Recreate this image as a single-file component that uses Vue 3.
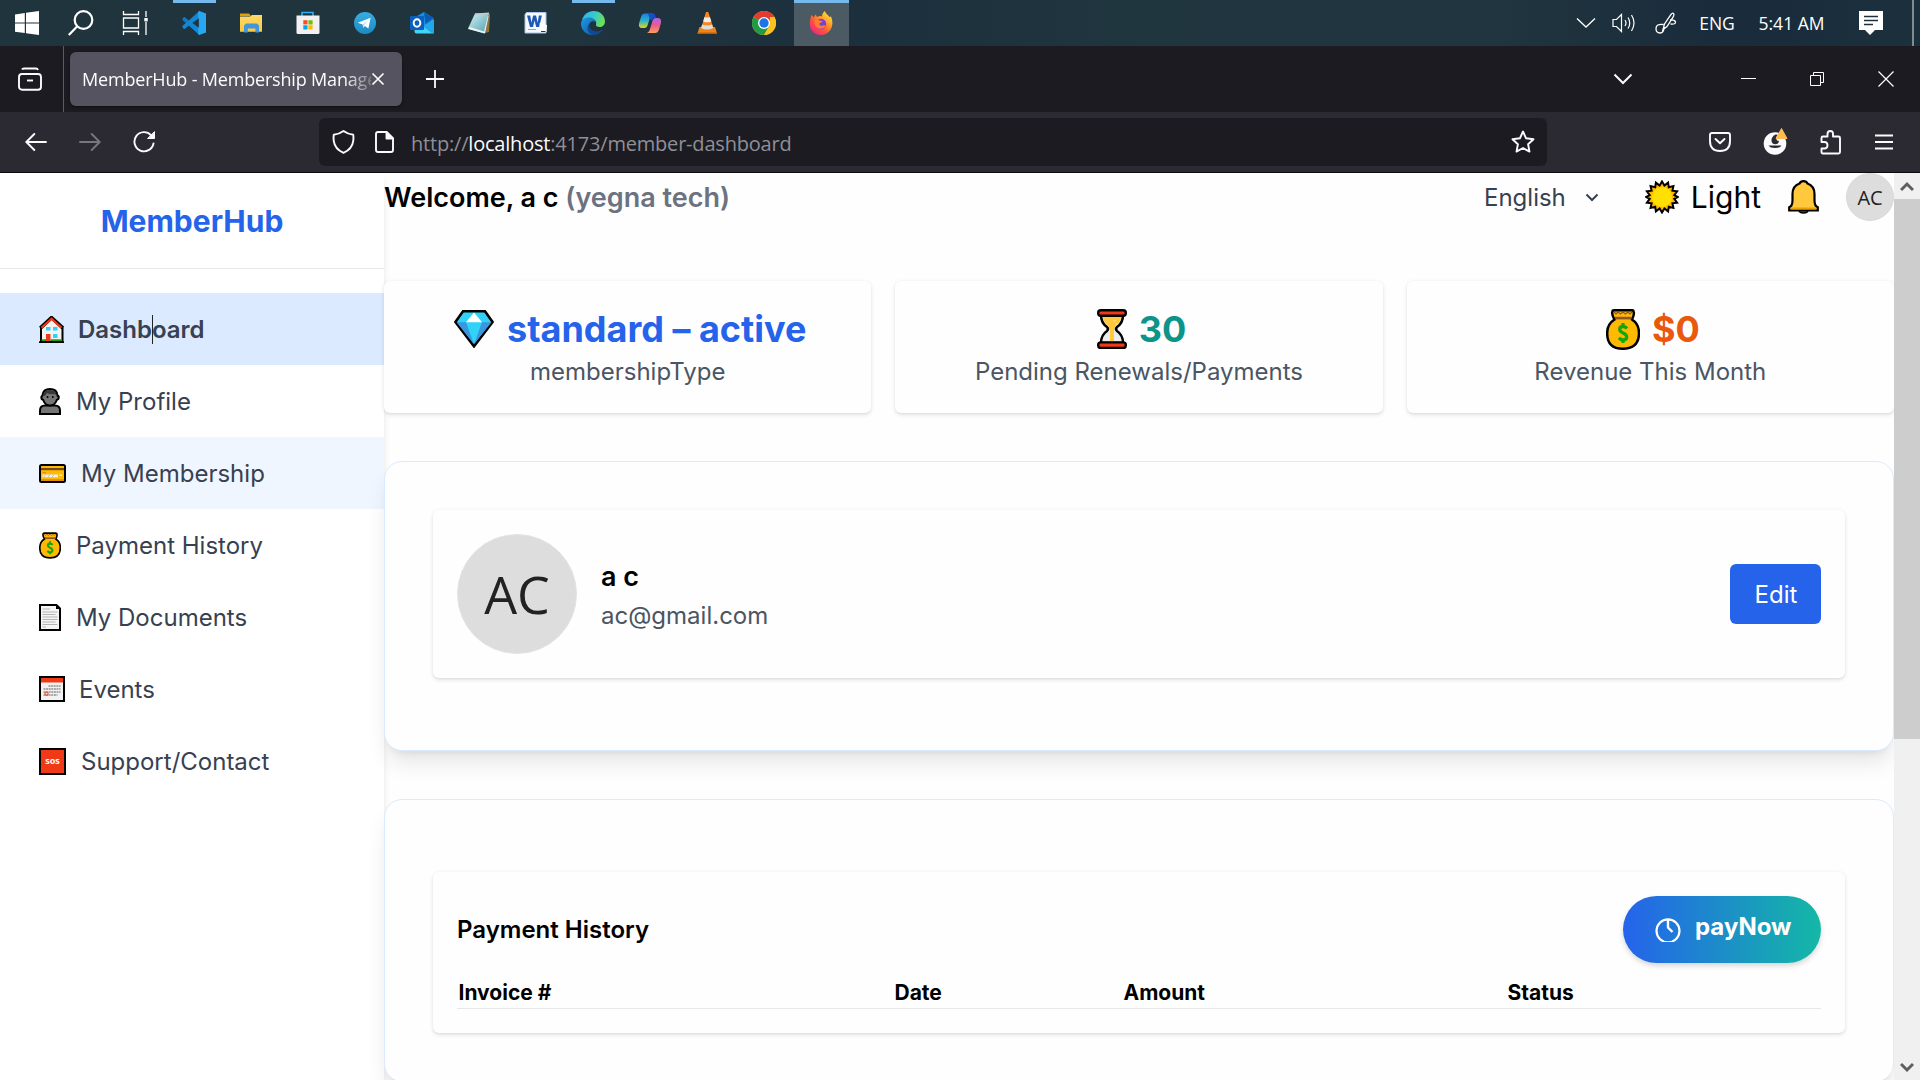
<script setup>
const pinned = [
  { id: 'vscode', open: true },
  { id: 'explorer' },
  { id: 'store' },
  { id: 'telegram' },
  { id: 'outlook' },
  { id: 'notepad' },
  { id: 'word' },
  { id: 'edge', open: true },
  { id: 'copilot' },
  { id: 'vlc' },
  { id: 'chrome' },
  { id: 'firefox', current: true },
]

const nav = [
  { label: 'Dashboard', icon: 'house', w: 25, h: 27, slot: 39, state: 'active' },
  { label: 'My Profile', icon: 'person', w: 22, h: 27, slot: 37 },
  { label: 'My Membership', icon: 'card', w: 27, h: 19, slot: 42, state: 'hover' },
  { label: 'Payment History', icon: 'moneybag', w: 22, h: 27, slot: 37 },
  { label: 'My Documents', icon: 'doc', w: 22, h: 27, slot: 37 },
  { label: 'Events', icon: 'calendar', w: 26, h: 26, slot: 40 },
  { label: 'Support/Contact', icon: 'sos', w: 27, h: 27, slot: 42 },
]

const stats = [
  { value: 'standard – active', label: 'membershipType', icon: 'gem', w: 40, h: 38, tone: 'blue', gap: 13 },
  { value: '30', label: 'Pending Renewals/Payments', icon: 'hourglass', w: 30, h: 40, tone: 'teal', gap: 12 },
  { value: '$0', label: 'Revenue This Month', icon: 'moneybag', w: 34, h: 41, tone: 'orange', gap: 12 },
]

const columns = ['Invoice #', 'Date', 'Amount', 'Status']
</script>

<template>
  <div class="screen">
    <svg class="sprite" aria-hidden="true">
      <defs>
        <linearGradient id="g-edge" x1="0" y1="0" x2="1" y2="0.3"><stop offset="0" stop-color="#2fb4ea" /><stop offset=".55" stop-color="#35c8d0" /><stop offset="1" stop-color="#6be05a" /></linearGradient>
        <linearGradient id="g-edge2" x1="0" y1="0" x2="1" y2="1"><stop offset="0" stop-color="#1f9ae0" /><stop offset="1" stop-color="#0c58b0" /></linearGradient>
        <linearGradient id="g-cop1" x1="0" y1="0" x2="0" y2="1"><stop offset="0" stop-color="#1b7fe6" /><stop offset=".5" stop-color="#2bb3c9" /><stop offset="1" stop-color="#e7d320" /></linearGradient>
        <linearGradient id="g-cop2" x1="0" y1="0" x2="0" y2="1"><stop offset="0" stop-color="#a765ee" /><stop offset=".5" stop-color="#ee5a8c" /><stop offset="1" stop-color="#ffa057" /></linearGradient>
        <linearGradient id="g-fox" x1="1" y1="0" x2="0.2" y2="1"><stop offset="0" stop-color="#fff44f" /><stop offset=".35" stop-color="#ffae2a" /><stop offset=".65" stop-color="#ff5634" /><stop offset="1" stop-color="#f0208c" /></linearGradient>
        <linearGradient id="g-tg" x1="0" y1="0" x2="0" y2="1"><stop offset="0" stop-color="#37aee2" /><stop offset="1" stop-color="#1c8ac4" /></linearGradient>
        <linearGradient id="g-folder" x1="0" y1="0" x2="0" y2="1"><stop offset="0" stop-color="#ffd968" /><stop offset="1" stop-color="#fcc83c" /></linearGradient>
        <linearGradient id="g-note" x1="0" y1="0" x2="1" y2="1"><stop offset="0" stop-color="#d9f2f4" /><stop offset="1" stop-color="#4d9fb0" /></linearGradient>
      </defs>

      <symbol id="vscode" viewBox="0 0 24 24">
        <path d="M17.3 0 7 9.5 2.6 6.1.6 7v2.2l16.7 14.4z" fill="#0f7ac4" />
        <path d="M17.3 24 7 14.5 2.6 17.9.6 17v-2.2L17.3.4z" fill="#1387d6" />
        <path d="M17.3 0 24 2.6v18.8L17.3 24l-1.2-.8V.8z" fill="#29a6f2" />
        <path d="M16.8 7.2v9.6L10.4 12z" fill="#20353f" />
      </symbol>
      <symbol id="explorer" viewBox="0 0 24 24">
        <path d="M1 2.6h9l1.8 2.4H1z" fill="#e0a106" />
        <path d="M1 5.500h10L13 4h10v16.800H1z" fill="url(#g-folder)" />
        <path d="M5 21.600v-7.200l2-2h11l2 2v7.200h-3.600v-4H8.800v4z" fill="#3f97de" />
      </symbol>
      <symbol id="store" viewBox="0 0 24 24">
        <path d="M6 6V1.500h11V6" fill="none" stroke="#27b3f0" stroke-width="1.600" />
        <path d="M.5 4.500h23v17q0 1.500-1.500 1.500H2q-1.500 0-1.500-1.500z" fill="#f1f1f1" />
        <path d="M7.300 9.200h4.200v4.200H7.300z" fill="#f25022" /><path d="M12.400 9.200h4.200v4.200h-4.200z" fill="#7fba00" />
        <path d="M7.300 14.300h4.200v4.200H7.300z" fill="#00a4ef" /><path d="M12.400 14.300h4.200v4.200h-4.200z" fill="#ffb900" />
      </symbol>
      <symbol id="telegram" viewBox="0 0 24 24">
        <circle cx="12" cy="12" r="11" fill="url(#g-tg)" />
        <path d="M4.800 11.800 17.600 6.800l-2.200 10.800-3.500-2.600-1.700 1.800-.5-3.200z" fill="#fff" />
        <path d="m9.700 13.600 5.700-4.700-4.400 5.300-.8 2.600z" fill="#b9d9ec" />
      </symbol>
      <symbol id="outlook" viewBox="0 0 24 24">
        <path d="M4.500 6.500 14 1l9.500 6v9H4.500z" fill="#1790df" />
        <path d="M14 1.500 23.500 7l-8 6z" fill="#0a5ab4" />
        <path d="M4.500 12 14 15l10-6v12q0 1.500-1.500 1.500h-16q-2 0-2-2z" fill="#43d3f8" />
        <path d="M24 9v12q0 1.500-1.500 1.500L13 15.500z" fill="#20a8ea" />
        <rect x="0" y="5" width="14" height="14" rx="1" fill="#0b5fbd" />
        <ellipse cx="7" cy="12" rx="3.300" ry="3.700" fill="none" stroke="#fff" stroke-width="2" />
      </symbol>
      <symbol id="notepad" viewBox="0 0 24 24">
        <path d="m19 2 4 1-1 18-4 1z" fill="#8c7443" />
        <path d="M8 2.500 22 2l-5 20.500L1 17.500z" fill="url(#g-note)" />
        <path d="m2.500 16 14.500 4.500 4-16 .5 1L18 22.500 1 18z" fill="#eef4f4" />
        <path d="M8 2.500 22 1.500v1.500L8 4z" fill="#c9c9c4" />
      </symbol>
      <symbol id="word" viewBox="0 0 24 24">
        <path d="M2.500 1.500h19.500V22H1V3.500z" fill="#f6f9fe" stroke="#a9c3ec" />
        <path d="M3 4.500h3.200l1.300 7.300 1.600-7.300h3l1.500 7.300 1.300-7.300h3l-2.700 11.500h-3L10.500 9.500 9 16H6z" fill="#1d57b7" />
        <path d="M4 18.500h8" stroke="#8aa6d8" /><path d="m15.500 12 7.500 2-.5 7h-6z" fill="#fff" /><path d="M17 20.500h4.500" stroke="#25344d" />
      </symbol>
      <symbol id="edge" viewBox="0 0 24 24">
        <path d="M1 9.500C2.500 3.500 7 0 12.500 0 19.500 0 24 5 24 10.500c0 3.500-2.500 5.500-5.500 5.500-2.500 0-4-1-3.500-2.500.8-2.500-.5-5.500-5-6C6 7.200 3 8 1 9.500z" fill="url(#g-edge)" />
        <path d="M0 12.500C0 8.500 4 6.500 8 6.500c3.500 0 6 2 6 4.500-3-2-6 .5-6 4.500s3.500 7.500 7 8C7 25.500 0 20.500 0 12.500z" fill="url(#g-edge2)" />
        <path d="M8.500 12.500c-1 6 5 9.500 10.500 7.200l3.200-1.500C20 22 16.500 24 13 24c-5.500-.5-9-7-4.500-11.500z" fill="#114a8e" />
      </symbol>
      <symbol id="copilot" viewBox="0 0 24 24">
        <path d="M7 2.500h8.500c-2.500 0-3.300 3-4.200 6.200L9.700 14c-.6 2-1.500 3-3.400 3H4c-3 0-3.600-2.300-2.700-5.500L3 6c.8-2.500 2-3.500 4-3.500z" fill="url(#g-cop1)" />
        <path d="M17 22H8.500c2.500 0 3.300-3 4.200-6.200l1.600-5.300c.6-2 1.500-3.500 3.400-3.500H20c3 0 3.600 2.800 2.700 6L21 18.500c-.8 2.500-2 3.500-4 3.500z" fill="url(#g-cop2)" />
        <path d="M10 2.500h5c2 0 2.300 2 3 4.500h-1c-2.500 0-3 1.500-3.500 3L11.500 7z" fill="#174fc3" />
      </symbol>
      <symbol id="vlc" viewBox="0 0 24 24">
        <path d="m4.500 16-2 6.500h19.500l-2-6.500z" fill="#ef8413" />
        <path d="m11 1-5 16.500q6 3 12.500 0L13.300 1z" fill="#f4861b" />
        <path d="m9.500 6-1.300 4.500q4 1.700 8.200 0L14.800 6q-2.500 1-5.300 0z" fill="#eee" />
        <path d="M7.200 13.500 6 17q6.200 3 12.300 0l-1.200-3.500q-5 2-9.900 0z" fill="#ddd" />
        <path d="M2.500 21.500h19.500v1.200H2.500z" fill="#c65c08" />
      </symbol>
      <symbol id="chrome" viewBox="0 0 24 24">
        <circle cx="12" cy="12" r="12" fill="#fcc31e" />
        <path d="M12 12 1.600 6A12 12 0 0 1 22.400 6z" fill="#e33b2e" />
        <path d="M12 12 1.600 6A12 12 0 0 0 12 24l5.200-9z" fill="#229a48" />
        <path d="M12 6h10.400l.8 2L12 12z" fill="#e33b2e" /><path d="M22.400 6A12 12 0 0 1 12 24l5.500-9 .5-9z" fill="#fcc31e" />
        <circle cx="12" cy="12" r="6" fill="#fff" /><circle cx="12" cy="12" r="4.700" fill="#1c74e8" />
      </symbol>
      <symbol id="firefox" viewBox="0 0 24 24">
        <path d="M2.500 4 5 6.500 6.500 3.500 8 6q3-1.500 5-.5Q13 2 16 0c.5 3 3 3.500 4.500 6l1.500-.5c4 9-1 18.500-10 18.500C5 24 .8 19 .8 13c0-3.500.7-6.500 1.700-9z" fill="url(#g-fox)" />
        <circle cx="12" cy="13" r="5.200" fill="#7440d8" />
        <path d="M5.500 9c2-1.500 4-1 5 .5l3 .5c-.5 1.500-2 2-3 2.300-.5 1.700 1 3 3.500 2.200 2-.7 3.500.2 2 1.500-3 3-9 2-10.500-3z" fill="#ff7a32" />
      </symbol>

      <symbol id="house" viewBox="0 0 25 27">
        <path d="M2 12.500v13.400h21.500V12.500L12.700 2.500z" fill="#f3f3f3" stroke="#000" stroke-width="2" />
        <path d="M1.200 12 12.500 1.500 24 12" fill="none" stroke="#000" stroke-width="3.400" />
        <path d="M2.500 11.800 12.500 2.800l10 9" fill="none" stroke="#f03a17" stroke-width="2.200" />
        <path d="M7 11h4.500v3.500H7zM14 11h4.500v3.500H14zM14 18h4.500v4H14z" fill="#31d2f7" />
        <path d="M7 18h4.500v7H7z" fill="#f03a17" /><path d="M2.500 23.200h4.500v1.800H2.500zM11.500 23.200h11.500v1.800H11.500z" fill="#16a60c" />
        <path d="M0 25.300h25V27H0z" fill="#000" />
      </symbol>
      <symbol id="person" viewBox="0 0 22 27">
        <path d="M1 26v-3.500q0-5 5-5h10q5 0 5 5V26z" fill="#767676" stroke="#000" stroke-width="2" />
        <path d="M3.500 7.500Q4 1 11 1t7.500 6.500q2 1 .8 3.500l-1.500 1q-2 5.500-6.800 5.500T4.200 12l-1.500-1q-1-2.500.8-3.500z" fill="#767676" stroke="#000" stroke-width="2" />
        <path d="M4.500 8.500Q4 2 11 2t6.500 6l-1.500-2q-5 1-8-1-1 2.500-3.500 3.500z" fill="#383838" />
        <circle cx="8.500" cy="9" r="1" /><circle cx="13.800" cy="9" r="1" />
      </symbol>
      <symbol id="card" viewBox="0 0 27 19">
        <rect x="1" y="1" width="25" height="17" rx="1.500" fill="#ffb900" stroke="#000" stroke-width="2" />
        <path d="M2 4h23v2.200H2z" fill="#7a4a1c" /><path d="M2 15.300h23v1.500H2z" fill="#d98200" />
        <path d="M3.500 10.500h15.500v2.700H3.500zM20.500 10.500h2.500v1.500h-2.500z" fill="#f2f2f2" />
        <path d="m5 13 2-2.500M9 13l2-2.500M13 13l2-2.500" stroke="#bcbcbc" /><path d="M3.500 8.700h3.500" stroke="#d98200" />
      </symbol>
      <symbol id="moneybag" viewBox="0 0 34 41">
        <path d="M6.500 2.500Q6.500 1.300 8 1.300h18q1.500 0 1.500 1.200 1.300 2.500-1.500 8 7 4.500 7 13.500 0 15.700-16 15.700T1.200 24Q1.200 15 8.500 10.500q-3.300-5.500-2-8z" fill="#ffb900" stroke="#000" stroke-width="2.500" />
        <path d="M9 7.800h16.500v2.600H9z" fill="#8e562e" />
        <path d="m8 3 2 2 2-2 2.500 2L17 3l2.500 2L22 3l2 2 2-2" fill="none" stroke="#8e562e" stroke-width="1.200" />
        <path d="M21 19.500q-1.500-2-4-2-3.300 0-3.300 2.800 0 2.200 3.300 3.600 3.700 1.500 3.700 4.100 0 3-3.700 3-2.500 0-4-2.200M17 14v4M17 30.500v3.500" fill="none" stroke="#16a60c" stroke-width="3.300" />
      </symbol>
      <symbol id="doc" viewBox="0 0 22 27">
        <path d="M1 1h16.500L21 4.500V26H1z" fill="#f5f5f5" stroke="#000" stroke-width="2" />
        <path d="M17 1v4h4z" /><path d="M3.500 5H11M3.500 8h15M3.500 10.500h13M3.500 13h15M3.500 15.500h15M3.500 18h13M3.500 20.500h15M3.500 23H7" stroke="#b5b5b5" stroke-width="1.100" />
      </symbol>
      <symbol id="calendar" viewBox="0 0 26 26">
        <path d="M1 1h24v24H1z" fill="#f2f2f2" stroke="#000" stroke-width="2" />
        <path d="M2 2h22v4.500H2z" fill="#f03a17" />
        <path d="M9.500 10h12M4.500 13h17M4.500 16h17M4.500 19h14" stroke="#a9a9a9" stroke-width="2" stroke-dasharray="2 .6" />
        <circle cx="7.500" cy="17.700" r="1.600" fill="none" stroke="#f05a3a" stroke-width="1.300" />
      </symbol>
      <symbol id="gem" viewBox="0 0 40 38">
        <path d="M9 1.300h22L38.600 12 20 36.300 1.400 12z" fill="#31d2f7" stroke="#000" stroke-width="2.600" />
        <path d="M2.500 12.300H12l8 22z" fill="#3a96dd" /><path d="M37.500 12.300H28l-8 22z" fill="#3a96dd" />
        <path d="M20 2.500 12 12.300h16z" fill="#fff" />
      </symbol>
      <symbol id="hourglass" viewBox="0 0 30 40">
        <path d="M4 6q0 8 6 12 2 2 0 4-6 4-6 12h22q0-8-6-12-2-2 0-4 6-4 6-12z" fill="#ececec" stroke="#000" stroke-width="2.500" />
        <path d="M5.500 6h19q-.5 7-5.500 11-2 2-2 4v12h-4V21q0-2-2-4-5-4-5.500-11z" fill="#ffc83d" />
        <path d="M16 11h3v2h-3zM18 14h3v2h-3z" fill="#ffd868" /><path d="M5.500 32.500h19v2h-19z" fill="#ffc83d" />
        <rect x="1.200" y="1.200" width="27.600" height="5.600" rx="2.500" fill="#f03a17" stroke="#000" stroke-width="2.400" />
        <rect x="1.200" y="33.400" width="27.600" height="5.600" rx="2.500" fill="#f03a17" stroke="#000" stroke-width="2.400" />
      </symbol>
      <symbol id="sun" viewBox="0 0 34 34">
        <path d="m17 1.500 2.400 4 3.700-2.900.7 4.700 4.600-1.200-1 4.600 4.700.6-2.800 3.800L33 17l-3.700 1.900 2.800 3.800-4.700.6 1 4.600-4.600-1.200-.7 4.700-3.700-2.900-2.400 4-2.400-4-3.700 2.900-.7-4.700-4.600 1.200 1-4.600-4.700-.6 2.800-3.800L1 17l3.700-1.900-2.800-3.800 4.700-.6-1-4.600 4.600 1.200.7-4.700 3.700 2.900z" fill="#ffb900" stroke="#000" stroke-width="2" />
        <circle cx="17" cy="17" r="10" fill="#ffe000" />
      </symbol>
      <symbol id="bell" viewBox="0 0 31 34">
        <path d="M11 30q0 3 4.500 3t4.500-3z" fill="#8e562e" stroke="#000" stroke-width="1.500" />
        <path d="M1.200 30.500v-3.300q3.300-1.200 3.300-7V14q0-8 7-10.500Q12.500 1.200 15.500 1.200t4 2.300q7 2.500 7 10.500v6.200q0 5.800 3.300 7v3.300z" fill="#ffc83d" stroke="#000" stroke-width="2.200" />
        <path d="M3 27.500h25v1.900H3z" fill="#e8a200" />
      </symbol>
    </svg>

    <header class="taskbar">
      <div class="sys"><svg width="24" height="24" viewBox="0 0 24 24" fill="#fff"><path d="M0 3.400 9.800 2v9.500H0zM11 1.800 24 0v11.500H11zM0 12.500h9.800V22L0 20.700zM11 12.500h13V24l-13-1.800z" /></svg></div>
      <div class="sys"><svg width="26" height="26" viewBox="0 0 26 26" fill="none" stroke="#fff" stroke-width="2.200"><circle cx="15.500" cy="10" r="8.800" /><path d="M9.300 16.300.8 25" /></svg></div>
      <div class="sys"><svg width="26" height="24" viewBox="0 0 26 24" fill="none" stroke="#fff" stroke-width="1.300"><path d="M1.500 0v3.500h15V0M1.500 24v-3.500h15V24M1.500 7h15v10h-15zM24 0v6M24 11v13" /><path d="M22.300 7h3.400v3.400h-3.400z" fill="#fff" stroke="none" /></svg></div>
      <div class="apps">
        <div v-for="a in pinned" :key="a.id" class="app" :class="{ open: a.open, current: a.current }">
          <svg width="24" height="24"><use :href="'#' + a.id" /></svg>
        </div>
      </div>
      <div class="tray">
        <div class="t-chev"><svg width="20" height="12" viewBox="0 0 20 12" fill="none" stroke="#fff" stroke-width="1.300"><path d="m1 1.500 9 8.500 9-8.500" /></svg></div>
        <div class="t-vol"><svg width="24" height="20" viewBox="0 0 24 20" fill="none" stroke="#fff" stroke-width="1.200"><path d="M1 6.500h3.500L9.500 1.500v17l-5-5H1z" /><path d="M13 7q2 3 0 6M16 4.500q3.500 5.500 0 11M19.500 2q5 8 0 16" /></svg></div>
        <div class="t-pen"><svg width="22" height="22" viewBox="0 0 22 22" fill="none" stroke="#fff" stroke-width="1.300"><path d="M8 17.500 9.500 12 16 2.500q1.500-2 2.500-1t0 2.800L12 14.500zM8.500 12.500Q1 11.500 1 16.500 1 21 5 21t4-6M15 8q5-.5 5.500 2t-5 2" /></svg></div>
        <div class="t-lang">ENG</div>
        <div class="t-time">5:41 AM</div>
        <div class="t-note"><svg width="24" height="24" viewBox="0 0 24 24"><path d="M0 0h24v19h-8l-5 5-5-5H0z" fill="#fff" /><path d="M5 5.500h14M5 9.500h14M5 13.500h9" stroke="#1d303c" stroke-width="1.300" /></svg></div>
        <div class="peek"></div>
      </div>
    </header>

    <div class="tabstrip">
      <div class="fxview"><svg width="24" height="24" viewBox="0 0 24 24" fill="none" stroke="#fbfbfe" stroke-width="1.900"><rect x="1" y="7" width="22" height="15.800" rx="3" /><path d="M9 13.500h6" /><path d="M4 2.500Q4.500 1.500 6 1.500h12q1.500 0 2 1.500" /></svg></div>
      <div class="tab">
        <span class="tab-title">MemberHub - Membership Manage</span>
        <svg width="14" height="14" viewBox="0 0 14 14" stroke="#fbfbfe" stroke-width="1.700"><path d="m1.500 1.500 11 11m0-11-11 11" /></svg>
      </div>
      <svg class="plus" width="18" height="18" viewBox="0 0 18 18" stroke="#fbfbfe" stroke-width="1.800"><path d="M9 0v18M0 9h18" /></svg>
      <div class="winctl">
        <svg class="wc-chev" width="20" height="12" viewBox="0 0 20 12" fill="none" stroke="#fbfbfe" stroke-width="2"><path d="m1.500 1.500 8.500 8.500 8.500-8.500" /></svg>
        <svg class="wc-min" width="15" height="14" viewBox="0 0 15 14" stroke="#fff"><path d="M0 6.500h15" /></svg>
        <svg class="wc-res" width="14" height="14" viewBox="0 0 14 14" fill="none" stroke="#fff"><path d="M.5 3.500h10v10H.5zM3.500 3.500v-3h10v10h-3" /></svg>
        <svg width="16" height="16" viewBox="0 0 16 16" stroke="#fff" stroke-width="1.200"><path d="m.5.500 15 15m0-15-15 15" /></svg>
      </div>
    </div>

    <div class="toolbar">
      <div class="navbtns">
        <svg width="22" height="18" viewBox="0 0 22 18" fill="none" stroke="#fbfbfe" stroke-width="1.900" stroke-linecap="round"><path d="M21 9H1.500M9.300 1 1.300 9l8 8" /></svg>
        <svg width="22" height="18" viewBox="0 0 22 18" fill="none" stroke="#77767e" stroke-width="1.900" stroke-linecap="round"><path d="M1 9h19.500M12.700 1l8 8-8 8" /></svg>
        <svg width="23" height="22" viewBox="0 0 23 22" fill="none" stroke="#fbfbfe" stroke-width="1.900" stroke-linecap="round"><path d="M20.500 12.500a9.600 9.600 0 1 1-2.300-8.200" /><path d="M21.500 1v6.500H15z" fill="#fbfbfe" stroke-width="1" /></svg>
      </div>
      <div class="urlbar">
        <svg width="23" height="24" viewBox="0 0 23 24" fill="none" stroke="#fbfbfe" stroke-width="1.900" stroke-linejoin="round"><path d="M11.500 1q4.500 3.300 9.700 3.700.5 3 0 6.500-1 8-9.700 11.700-8.700-3.700-9.700-11.700-.5-3.500 0-6.500Q7 4.300 11.500 1z" /></svg>
        <svg class="page" width="19" height="22" viewBox="0 0 19 22" fill="none" stroke="#fbfbfe" stroke-width="1.900" stroke-linejoin="round"><path d="M3 1h8.500l6.500 6.500V19q0 2-2 2H3q-2 0-2-2V3q0-2 2-2z" /><path d="M11.500 1v6.500H18z" fill="#fbfbfe" /></svg>
        <span class="url">http://<b>localhost</b>:4173/member-dashboard</span>
        <svg class="star" width="24" height="24" viewBox="0 0 24 24" fill="none" stroke="#fbfbfe" stroke-width="1.900" stroke-linejoin="round"><path d="m12 1.500 3.100 6.800 7.400.9-5.400 5.100 1.400 7.300L12 18l-6.500 3.600 1.400-7.300L1.500 9.200l7.400-.9z" /></svg>
      </div>
      <div class="exts">
        <svg width="22" height="20" viewBox="0 0 22 20" fill="none" stroke="#fbfbfe" stroke-width="1.900" stroke-linecap="round" stroke-linejoin="round"><path d="M3 1h16q2 0 2 2v6q0 10-10 10T1 9V3q0-2 2-2z" /><path d="m6.500 7 4.500 4.300L15.500 7" /></svg>
        <svg class="account" width="25" height="28" viewBox="0 0 25 28"><circle cx="12" cy="16.500" r="11.300" fill="#fbfbfe" /><path d="M12.500 7.500Q8 10 8.500 14q.7 3.200 3.700 3.200 3.300 0 3.800-3.200-2.500 0-2.800-2.200-.2-2 1.800-4z" fill="#2b2a33" /><path d="M5.500 18.500h13q-1.500 2.500-6.500 2.500t-6.500-2.500z" fill="#2b2a33" /><path d="M18.500 1.500 24 11.500H13z" fill="#ffbd4f" stroke="#ffbd4f" stroke-linejoin="round" /></svg>
        <svg width="21" height="25" viewBox="0 0 21 25" fill="none" stroke="#fbfbfe" stroke-width="1.900" stroke-linejoin="round"><path d="M1.500 12V8q0-1.500 1.500-1.500h4.500V4q0-3 2.800-3T13 4v2.500h5.500Q20 6.500 20 8v14q0 1.500-1.500 1.500H3q-1.500 0-1.500-1.500v-3.500h3q3 0 3-3.200T4.500 12z" /></svg>
        <svg class="menu" width="18" height="16" viewBox="0 0 18 16" stroke="#fbfbfe" stroke-width="1.800"><path d="M0 1.500h18M0 8h18M0 14.500h18" /></svg>
      </div>
    </div>

    <div class="viewport">
      <aside class="sidebar">
        <div class="brand">MemberHub</div>
        <nav>
          <a v-for="n in nav" :key="n.label" class="item" :class="n.state">
            <span class="slot" :style="{ width: n.slot + 'px' }">
              <span v-if="n.icon === 'sos'" class="sos">sos</span>
              <svg v-else :width="n.w" :height="n.h"><use :href="'#' + n.icon" /></svg>
            </span>
            <span>{{ n.label }}</span>
            <i v-if="n.state === 'active'" class="caret"></i>
          </a>
        </nav>
      </aside>

      <main>
        <div class="top">
          <h1>Welcome, a c <span>(yegna tech)</span></h1>
          <div class="actions">
            <span class="lang">English</span>
            <svg class="lang-chev" width="14" height="10" viewBox="0 0 14 10" fill="none" stroke="#374151" stroke-width="2"><path d="m1.500 1.500 5.500 5.500 5.500-5.500" /></svg>
            <svg class="sun" width="34" height="34"><use href="#sun" /></svg>
            <span class="theme">Light</span>
            <svg class="bell" width="31" height="34"><use href="#bell" /></svg>
            <div class="avatar small">AC</div>
          </div>
        </div>

        <div class="stats">
          <div v-for="s in stats" :key="s.label" class="stat">
            <div class="value" :class="s.tone">
              <svg :width="s.w" :height="s.h" :style="{ marginRight: s.gap + 'px' }"><use :href="'#' + s.icon" /></svg>{{ s.value }}
            </div>
            <div class="label">{{ s.label }}</div>
          </div>
        </div>

        <section class="panel profile-panel">
          <div class="card profile">
            <div class="avatar big">AC</div>
            <div class="who">
              <div class="name">a c</div>
              <div class="mail">ac@gmail.com</div>
            </div>
            <button class="edit">Edit</button>
          </div>
        </section>

        <section class="panel pay-panel">
          <div class="card payments">
            <div class="pay-head">
              <h2>Payment History</h2>
              <button class="pay">
                <svg width="26" height="24" viewBox="0 0 26 24" fill="none" stroke="#fff" stroke-width="2.200"><circle cx="13" cy="12.800" r="11.500" /><path d="M13 1.500v8l4.500 4.500" stroke-width="2.400" /></svg>
                <span>payNow</span>
              </button>
            </div>
            <div class="thead">
              <div v-for="c in columns" :key="c">{{ c }}</div>
            </div>
          </div>
        </section>
      </main>

      <div class="scrollbar">
        <div class="sb-btn"><svg width="14" height="11" viewBox="0 0 14 11" fill="none" stroke="#5f5f5f" stroke-width="3"><path d="m1 9 6-6 6 6" /></svg></div>
        <div class="thumb"></div>
        <div class="sb-btn down"><svg width="14" height="11" viewBox="0 0 14 11" fill="none" stroke="#5f5f5f" stroke-width="3"><path d="m1 2 6 6 6-6" /></svg></div>
      </div>
    </div>
  </div>
</template>

<style>
body { margin: 0; overflow: hidden; }
</style>

<style scoped>
* { box-sizing: border-box; }
.screen { width: 1920px; height: 1080px; overflow: hidden; display: flex; flex-direction: column; background: #fefefe; font-family: Inter, "Liberation Sans", sans-serif; }
.sprite { position: absolute; width: 0; height: 0; }
svg { flex: none; display: block; }

.taskbar { height: 46px; flex: none; display: flex; align-items: stretch; background: linear-gradient(90deg, #20343d 0%, #20343e 30%, #1c2f3d 45%, #20363f 60%, #20353f 78%, #1a2b3b 90%, #1b303d 100%); color: #fff; }
.sys { width: 54px; display: flex; align-items: center; justify-content: center; }
.apps { display: flex; margin-left: 3px; }
.app { width: 57px; display: flex; align-items: center; justify-content: center; }
.app.open { background: linear-gradient(#76b9ed, #76b9ed) 8px 0 / 43px 3px no-repeat; }
.app.current { background: linear-gradient(#76b9ed, #76b9ed) 2px 0 / 55px 3px no-repeat, linear-gradient(#4c5a64, #4c5a64) 2px 0 / 55px 46px no-repeat; }
.tray { margin-left: auto; display: flex; align-items: center; font: 17.5px "Open Sans", "Noto Sans", sans-serif; }
.tray > div { display: flex; justify-content: center; align-items: center; white-space: nowrap; }
.t-chev { width: 38px; }
.t-vol { width: 38px; }
.t-pen { width: 45px; }
.t-lang { width: 58px; }
.t-time { width: 91px; }
.t-note { width: 67px; }
.tray > .peek { width: 2px; height: 46px; background: #7f8b91; margin: 0 6px 0 8px; }

.tabstrip { height: 66px; flex: none; background: #1c1b22; display: flex; align-items: center; }
.fxview { width: 64px; height: 66px; border-right: 1px solid #5b5b66; display: flex; align-items: center; padding-left: 18px; }
.tab { margin-left: 6px; width: 332px; height: 54px; border-radius: 6px; background: #54535f; box-shadow: 0 1px 3px rgba(0, 0, 0, .5); display: flex; align-items: center; padding-left: 12px; }
.tab-title { width: 289px; white-space: nowrap; color: #fbfbfe; font: 18px "Open Sans", "Noto Sans", sans-serif; letter-spacing: -.18px; -webkit-mask-image: linear-gradient(90deg, #000 262px, transparent 297px); mask-image: linear-gradient(90deg, #000 262px, transparent 297px); }
.plus { margin-left: 24px; }
.winctl { margin-left: auto; margin-right: 26px; display: flex; align-items: center; }
.wc-chev { margin-right: 108px; }
.wc-min { margin-right: 54px; }
.wc-res { margin-right: 54px; }

.toolbar { height: 61px; flex: none; background: #2b2a33; border-bottom: 1px solid #0c0c0d; display: flex; align-items: center; }
.navbtns { width: 319px; padding-left: 25px; display: flex; align-items: center; gap: 32px; }
.urlbar { width: 1228px; height: 48px; border-radius: 6px; background: #1c1b22; display: flex; align-items: center; padding: 0 12px 0 13px; }
.page { margin-left: 20px; }
.url { margin: 2px 0 0 17px; color: #8f8f97; font: 20px "Open Sans", "Noto Sans", sans-serif; letter-spacing: -.2px; white-space: nowrap; }
.url b { font-weight: 400; color: #fbfbfe; }
.star { margin-left: auto; }
.exts { margin-left: auto; margin-right: 27px; display: flex; align-items: center; gap: 32px; }
.account { margin-top: -3px; }
.menu { margin-left: 2px; }

.viewport { flex: none; height: 907px; display: flex; overflow: hidden; }
.sidebar { position: relative; width: 384px; height: 907px; flex: none; background: #fff; box-shadow: 0 6px 9px -1.5px rgba(0, 0, 0, .1), 0 3px 6px -3px rgba(0, 0, 0, .1); }
.brand { height: 96px; padding-top: 27px; line-height: 42px; text-align: center; font-size: 30px; font-weight: 700; color: #2563eb; border-bottom: 1px solid #e5e7eb; }
nav { padding-top: 24px; }
.item { height: 72px; display: flex; align-items: center; padding-left: 39px; font-size: 24px; color: #374151; white-space: nowrap; position: relative; }
.item.active { background: #dbeafe; font-weight: 600; }
.item.hover { background: #eff6ff; }
.sos { display: block; width: 27px; height: 27px; border: 2px solid #000; background: #f03a17; color: #fff; font: 700 9px/21px "Open Sans", sans-serif; text-align: center; }
.caret { position: absolute; left: 152px; top: 22px; width: 1px; height: 29px; background: #222; }

main { flex: none; width: 1510px; position: relative; }
.top { height: 48px; display: flex; align-items: center; }
h1 { margin: 2px 0 0; font-size: 27px; font-weight: 600; color: #000; line-height: 42px; white-space: nowrap; }
h1 span { color: #6b7280; }
.actions { margin-left: auto; display: flex; align-items: center; height: 48px; }
.lang { font-size: 24px; color: #374151; }
.lang-chev { margin: 2px 46px 0 19px; }
.theme { font-size: 30px; margin-left: 12px; color: #000; }
.bell { margin: 0 27px; }
.avatar { border-radius: 50%; background: #ddd; color: #222; font-family: "Open Sans", "Noto Sans", sans-serif; display: flex; align-items: center; justify-content: center; flex: none; }
.avatar.small { width: 48px; height: 48px; font-size: 20px; border: 1px solid #d8dadf; }
.avatar.big { width: 120px; height: 120px; font-size: 52px; padding-bottom: 2px; border: 1px solid #e3e4e6; }

.stats { margin-top: 60px; display: grid; grid-template-columns: repeat(3, 1fr); gap: 24px; }
.stat, .card { background: #fefefe; border-radius: 6px; box-shadow: 0 1.5px 4.5px rgba(0, 0, 0, .1), 0 1.5px 3px -1.5px rgba(0, 0, 0, .1); }
.stat { height: 132px; padding: 24px; text-align: center; }
.value { height: 48px; padding-left: 5px; display: flex; align-items: center; justify-content: center; font-size: 36px; font-weight: 700; line-height: 48px; white-space: nowrap; }
.blue { color: #2563eb; }
.teal { color: #0d9488; }
.orange { color: #ea580c; }
.label { margin-top: 1px; font-size: 24px; line-height: 36px; color: #4b5563; }

.panel { margin-top: 48px; border: 1px solid #dbeafe; border-radius: 18px; padding: 48px; background: #fefefe; box-shadow: 0 15px 22.5px -4.5px rgba(0, 0, 0, .1), 0 6px 9px -6px rgba(0, 0, 0, .1); }
.profile-panel { height: 290px; }
.profile { height: 168px; padding: 24px; display: flex; align-items: center; }
.who { margin: 2px 0 0 24px; }
.name { font-size: 27px; line-height: 42px; font-weight: 600; }
.mail { font-size: 24px; line-height: 36px; color: #4b5563; }
.edit { margin-left: auto; width: 91px; height: 60px; border: 0; border-radius: 6px; padding: 0 0 0 1px; background: #2563eb; color: #fff; font: 24px Inter, sans-serif; }
.pay-panel { height: 283px; padding-top: 72px; }
.payments { height: 161px; padding: 24px; }
.pay-head { display: flex; justify-content: space-between; align-items: center; }
h2 { margin: 0; font-size: 24px; font-weight: 600; line-height: 36px; }
.pay { width: 198px; height: 67px; border: 0; border-radius: 34px; padding: 0 0 0 32px; display: flex; align-items: center; color: #fff; font: 700 24px Inter, sans-serif; background: linear-gradient(90deg, #2563eb, #14b8a6); box-shadow: 0 3px 6px -1px rgba(0, 0, 0, .2); }
.pay span { margin-left: 14px; margin-bottom: 7px; }
.thead { margin-top: 12px; height: 34px; padding: 3px 0 0 1.5px; display: grid; grid-template-columns: 436px 229px 384px 1fr; font-size: 21px; line-height: 30px; font-weight: 700; border-bottom: 1px solid #e5e7eb; }

.scrollbar { width: 26px; flex: none; background: #f0f0f0; display: flex; flex-direction: column; position: relative; }
.sb-btn { height: 26px; display: flex; align-items: center; justify-content: center; }
.thumb { height: 540px; background: #cdcdcd; }
.down { margin-top: auto; }
</style>
